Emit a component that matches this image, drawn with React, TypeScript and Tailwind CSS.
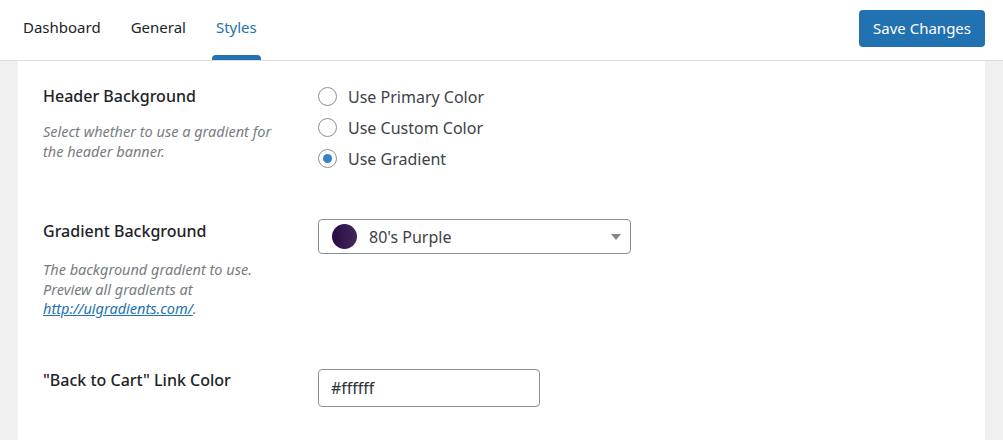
import React from 'react';

const font = { fontFamily: '"Noto Sans", "Open Sans", sans-serif' };

const Radio: React.FC<{ label: string; checked?: boolean }> = ({ label, checked }) => (
  <label className="flex items-center h-[31px] gap-[11px] text-[16px] text-[#3c434a]">
    <span className="w-[19px] h-[19px] rounded-full border border-[#8c8f94] bg-white flex items-center justify-center">
      {checked && <span className="w-[9px] h-[9px] rounded-full bg-[#3582c4]" />}
    </span>
    {label}
  </label>
);

const App: React.FC = () => {
  return (
    <div className="w-[1003px] h-[440px] bg-[#f0f0f1] overflow-hidden" style={font}>
      {/* Top nav */}
      <div className="h-[61px] bg-white border-b border-[#dcdcde] flex items-stretch justify-between pl-[23px] pr-[18px]">
        <nav className="flex items-stretch gap-[30px] text-[15px]">
          <a className="flex items-center pb-[5px] text-[#1d2327]">Dashboard</a>
          <a className="flex items-center pb-[5px] text-[#1d2327]">General</a>
          <a className="relative flex items-center pb-[5px] px-[4px] -mx-[4px] text-[#2271b1]">
            Styles
            <span className="absolute left-0 right-0 bottom-0 h-[5px] rounded-t-[4px] bg-[#2271b1]" />
          </a>
        </nav>
        <div className="flex items-center pb-[4px]">
          <button className="h-[37px] px-[14px] rounded-[4px] bg-[#2271b1] text-white text-[15px]">
            Save Changes
          </button>
        </div>
      </div>

      {/* Panel */}
      <div className="mx-[18px] bg-white h-full pl-[25px] pt-[23px]">
        <div className="flex">
          <div className="w-[275px]">
            <h3 className="text-[16px] font-medium text-[#1d2327] leading-[24px]">Header Background</h3>
            <p className="mt-[13px] text-[14.5px] italic text-[#787c82] leading-[20px] w-[240px]">
              Select whether to use a gradient for the header banner.
            </p>
          </div>
          <div className="-mt-[3px]">
            <Radio label="Use Primary Color" />
            <Radio label="Use Custom Color" />
            <Radio label="Use Gradient" checked />
          </div>
        </div>

        <div className="flex mt-[45px]">
          <div className="w-[275px]">
            <h3 className="text-[16px] font-medium text-[#1d2327] leading-[24px]">Gradient Background</h3>
            <p className="mt-[17px] text-[14.5px] italic text-[#787c82] leading-[19.5px] w-[240px]">
              The background gradient to use. Preview all gradients at{' '}
              <a className="text-[#2271b1] underline">http://uigradients.com/</a>.
            </p>
          </div>
          <div>
            <div className="w-[313px] h-[35px] border border-[#8c8f94] rounded-[4px] flex items-center pl-[13px] pr-[9px]">
              <span className="w-[25px] h-[25px] rounded-full bg-gradient-to-r from-[#2a0845] to-[#41295a]" />
              <span className="ml-[12px] text-[16px] text-[#3c434a] flex-1">80's Purple</span>
              <svg width="10" height="6" viewBox="0 0 10 6">
                <path d="M0 0 L10 0 L5 6 Z" fill="#888" />
              </svg>
            </div>
          </div>
        </div>

        <div className="flex mt-[49px]">
          <div className="w-[275px]">
            <h3 className="text-[16px] font-medium text-[#1d2327] leading-[24px]">"Back to Cart" Link Color</h3>
          </div>
          <div className="mt-[1px]">
            <div className="w-[222px] h-[38px] border border-[#8c8f94] rounded-[4px] flex items-center pl-[12px] text-[16px] text-[#2c3338]">
              #ffffff
            </div>
          </div>
        </div>
      </div>
    </div>
  );
};

export default App;
